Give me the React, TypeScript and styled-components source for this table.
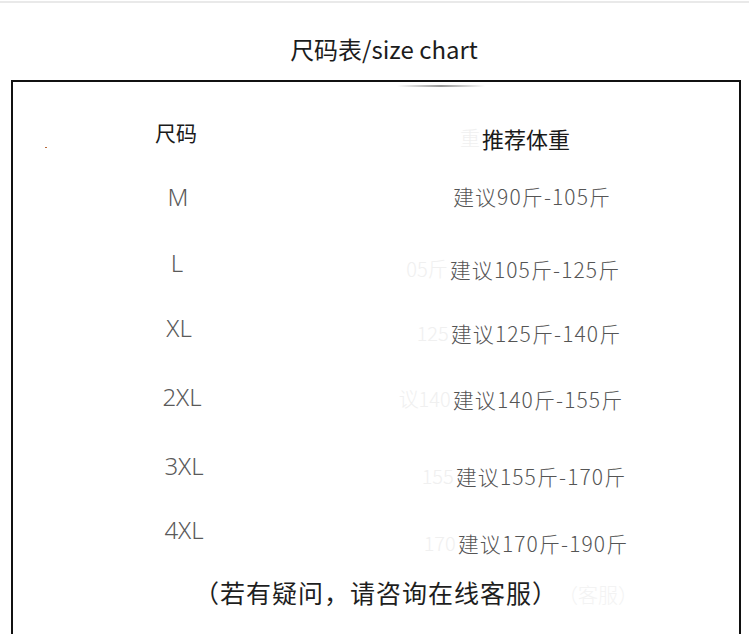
import React from 'react';
import styled, { createGlobalStyle } from 'styled-components';

const GlobalStyle = createGlobalStyle`
  html, body {
    margin: 0;
    padding: 0;
    background: #ffffff;
    overflow: hidden;
  }
  body {
    font-family: "Noto Sans CJK SC", "Noto Sans", sans-serif;
  }
`;

const Page = styled.div`
  width: 749px;
  height: 634px;
  display: flex;
  flex-direction: column;
  background: #ffffff;
`;

const TopRule = styled.div`
  height: 2px;
  margin-top: 1px;
  background: #e9e9e9;
  flex-shrink: 0;
`;

const Title = styled.h1`
  margin: 30px 0 15px;
  padding-left: 19px;
  text-align: center;
  font-size: 24px;
  line-height: 32px;
  font-weight: 400;
  color: #1c1c1c;
`;

const ChartBox = styled.div`
  position: relative;
  flex: 1;
  margin: 0 8px 0 11px;
  border: 2px solid #111;
  border-bottom: none;
  padding-top: 36px;
  display: flex;
  flex-direction: column;
`;

const Shine = styled.div`
  position: absolute;
  top: 3px;
  left: 384px;
  width: 88px;
  height: 2px;
  background: linear-gradient(90deg, rgba(150,150,150,0), rgba(140,140,140,0.9) 50%, rgba(150,150,150,0));
`;

const Speck = styled.div`
  position: absolute;
  top: 65px;
  left: 32px;
  width: 2px;
  height: 1px;
  background: #b86a3a;
`;

const Row = styled.div`
  display: grid;
  grid-template-columns: 330px 1fr;
  height: 66px;
`;

const SizeCell = styled.div<{ $dx: number; $dy: number; $head?: boolean }>`
  justify-self: center;
  margin-top: ${p => p.$dy}px;
  transform: translateX(${p => p.$dx}px);
  font-family: ${p => (p.$head ? '"Noto Sans CJK SC", sans-serif' : '"Noto Sans", "Noto Sans CJK SC", sans-serif')};
  font-size: ${p => (p.$head ? 21 : 24)}px;
  line-height: 24px;
  font-weight: ${p => (p.$head ? 400 : 300)};
  color: ${p => (p.$head ? '#1a1a1a' : '#5a5a5a')};
  height: 24px;
`;

const WeightCell = styled.div<{ $dx: number; $dy: number; $head?: boolean }>`
  position: relative;
  justify-self: center;
  margin-top: ${p => p.$dy}px;
  transform: translateX(${p => p.$dx}px);
  font-size: ${p => (p.$head ? 22 : 21)}px;
  letter-spacing: ${p => (p.$head ? 0 : 1.1)}px;
  line-height: 24px;
  font-weight: ${p => (p.$head ? 400 : 300)};
  color: ${p => (p.$head ? '#1a1a1a' : '#555555')};
  height: 24px;
  white-space: nowrap;
`;

const Ghost = styled.span`
  position: absolute;
  right: 100%;
  top: 0;
  margin-right: 2px;
  font-size: 20px;
  letter-spacing: 0;
  font-weight: 300;
  color: #f0f0f0;
  white-space: nowrap;
`;

const Footer = styled.div`
  position: relative;
  margin-top: -3px;
  text-align: center;
  font-size: 25px;
  letter-spacing: 1px;
  line-height: 30px;
  font-weight: 400;
  color: #1e1e1e;
`;

const FooterGhost = styled.span`
  position: absolute;
  left: 545px;
  top: 3px;
  font-size: 20px;
  letter-spacing: 0;
  font-weight: 300;
  color: #f3f3f3;
`;

const rows = [
  { size: 'M', sdx: 0, sdy: 1, weight: '建议90斤-105斤', wdx: -9, wdy: 0, ghost: '' },
  { size: 'L', sdx: -1, sdy: 1, weight: '建议105斤-125斤', wdx: -6, wdy: 7, ghost: '05斤' },
  { size: 'XL', sdx: 1, sdy: 0, weight: '建议125斤-140斤', wdx: -5, wdy: 5, ghost: '125' },
  { size: '2XL', sdx: 4, sdy: 3, weight: '建议140斤-155斤', wdx: -3, wdy: 5, ghost: '议140' },
  { size: '3XL', sdx: 6, sdy: 6, weight: '建议155斤-170斤', wdx: 0, wdy: 16, ghost: '155' },
  { size: '4XL', sdx: 6, sdy: 4, weight: '建议170斤-190斤', wdx: 2, wdy: 17, ghost: '170' },
];

export default function App() {
  return (
    <Page>
      <GlobalStyle />
      <TopRule />
      <Title>尺码表/size chart</Title>
      <ChartBox>
        <Shine />
        <Speck />
        <Row>
          <SizeCell $head $dx={-2} $dy={2}>尺码</SizeCell>
          <WeightCell $head $dx={-15} $dy={8}>
            <Ghost>重</Ghost>推荐体重
          </WeightCell>
        </Row>
        {rows.map(r => (
          <Row key={r.size}>
            <SizeCell $dx={r.sdx} $dy={r.sdy}>{r.size}</SizeCell>
            <WeightCell $dx={r.wdx} $dy={r.wdy}>
              {r.ghost && <Ghost>{r.ghost}</Ghost>}
              {r.weight}
            </WeightCell>
          </Row>
        ))}
        <Footer>
          （若有疑问，请咨询在线客服）
          <FooterGhost>（客服）</FooterGhost>
        </Footer>
      </ChartBox>
    </Page>
  );
}
